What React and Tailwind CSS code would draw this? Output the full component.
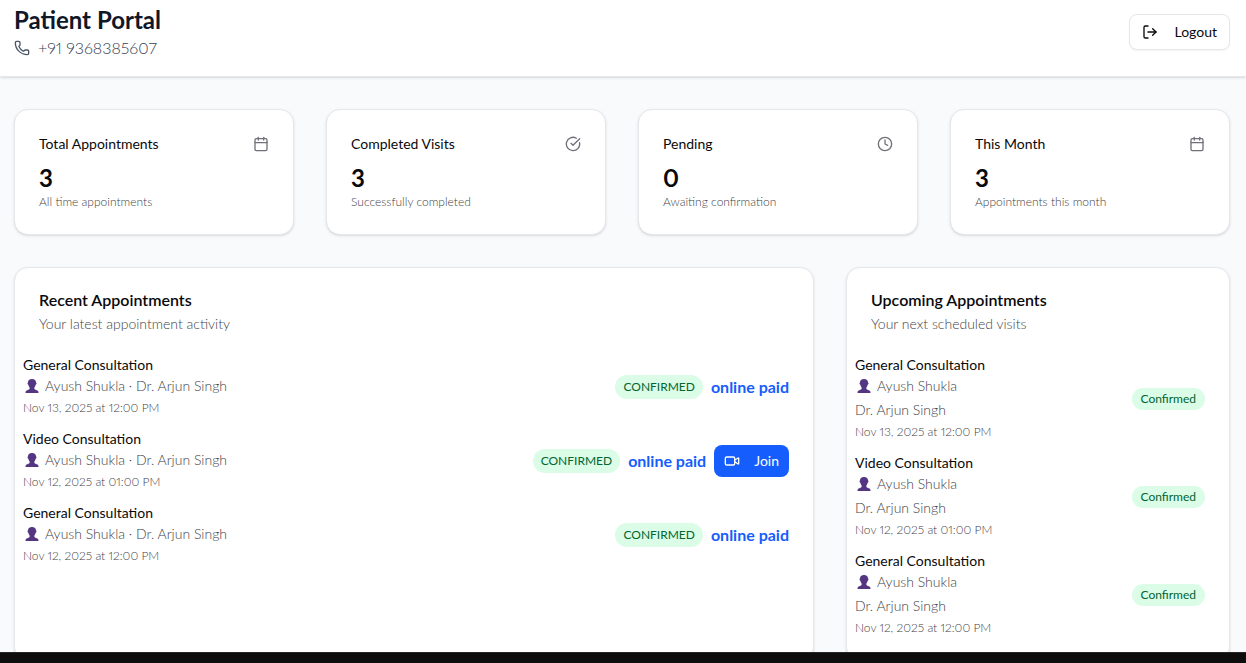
import React from "react";
import {
  Calendar,
  CircleCheckBig,
  Clock,
  LogOut,
  Phone,
  Video
} from "lucide-react";

const stats = [
  { title: "Total Appointments", value: 3, note: "All time appointments", icon: Calendar },
  { title: "Completed Visits", value: 3, note: "Successfully completed", icon: CircleCheckBig },
  { title: "Pending", value: 0, note: "Awaiting confirmation", icon: Clock },
  { title: "This Month", value: 3, note: "Appointments this month", icon: Calendar }
];

const appointments = [
  {
    id: 1,
    type: "General Consultation",
    patient: "Ayush Shukla",
    doctor: "Dr. Arjun Singh",
    date: "Nov 13, 2025 at 12:00 PM",
    canJoin: false
  },
  {
    id: 2,
    type: "Video Consultation",
    patient: "Ayush Shukla",
    doctor: "Dr. Arjun Singh",
    date: "Nov 12, 2025 at 01:00 PM",
    canJoin: true
  },
  {
    id: 3,
    type: "General Consultation",
    patient: "Ayush Shukla",
    doctor: "Dr. Arjun Singh",
    date: "Nov 12, 2025 at 12:00 PM",
    canJoin: false
  }
];

const PersonIcon = () => (
  <svg viewBox="0 0 14 14" className="h-3.5 w-3.5" aria-hidden="true">
    <path
      d="M7 0C4.4 0 3 1.2 3 3.5c-.5.1-.6.6-.5 1.1.1.6.4 1 .8 1.1.3 1.2.7 2.200 1.300 2.800v1.500C4.200 10.800 1.700 10.900.9 12.100.6 12.600.5 13.300.5 14h13c0-.7-.1-1.400-.4-1.900C12.300 10.900 9.800 10.800 9.400 10V8.500c.6-.6 1-1.600 1.300-2.800.4-.1.7-.5.8-1.100.1-.5 0-1-.5-1.100C11 1.200 9.600 0 7 0Z"
      fill="#533582"
    />
  </svg>
);

const Card = ({ className = "", children }) => (
  <div className={`rounded-[14px] border border-gray-200 bg-white shadow-sm ${className}`}>
    {children}
  </div>
);

const StatCard = ({ title, value, note, icon: Icon }) => (
  <Card className="p-6">
    <div className="mb-2 flex items-center justify-between">
      <h3 className="text-sm">{title}</h3>
      <Icon className="h-4 w-4 text-zinc-500" />
    </div>
    <div className="text-2xl font-bold">{value}</div>
    <p className="text-xs font-light text-zinc-700">{note}</p>
  </Card>
);

const ListCard = ({ title, description, className = "", children }) => (
  <Card className={`py-6 ${className}`}>
    <div className="mb-6 px-6">
      <h2 className="mb-1.5 text-base leading-4 font-semibold">{title}</h2>
      <p className="text-sm font-light text-zinc-700">{description}</p>
    </div>
    <ul className="space-y-4 pr-6 pl-2">{children}</ul>
  </Card>
);

const PatientLine = ({ children }) => (
  <p className="flex items-center text-sm leading-6 font-light text-zinc-700">
    <span className="mr-1.5 ml-0.5">
      <PersonIcon />
    </span>
    {children}
  </p>
);

const App = () => {
  return (
    <div className="flex h-screen flex-col overflow-hidden bg-gray-50 font-['Lato',sans-serif] text-zinc-950 proportional-nums">
      <div className="min-h-0 flex-1 overflow-hidden">
        <header className="flex items-center justify-between border-b border-gray-200 bg-white pt-1 pr-4 pb-4 pl-3.5 shadow-sm">
          <div>
            <h1 className="text-2xl font-bold text-gray-900">Patient Portal</h1>
            <p className="flex items-center gap-2 text-base font-light text-gray-700">
              <Phone className="h-4 w-4 text-gray-600" />
              +91 9368385607
            </p>
          </div>
          <button
            type="button"
            className="flex h-9 items-center gap-4 rounded-lg border border-gray-200 bg-white px-3 text-sm shadow-xs"
          >
            <LogOut className="h-4 w-4" />
            Logout
          </button>
        </header>

        <main className="space-y-8 py-8 pr-4 pl-3.5">
          {/* Stats */}
          <div className="grid grid-cols-4 gap-8">
            {stats.map((stat) => (
              <StatCard key={stat.title} {...stat} />
            ))}
          </div>

          <div className="grid grid-cols-3 gap-8">
            {/* Recent Appointments */}
            <ListCard
              title="Recent Appointments"
              description="Your latest appointment activity"
              className="col-span-2"
            >
              {appointments.map((item) => (
                <li key={item.id} className="flex items-center justify-between">
                  <div>
                    <h3 className="mb-0.5 text-sm leading-3.5">{item.type}</h3>
                    <PatientLine>
                      {item.patient} · {item.doctor}
                    </PatientLine>
                    <p className="mt-0.5 text-xs font-light text-zinc-700">{item.date}</p>
                  </div>
                  <div className="flex items-center gap-2">
                    <span className="rounded-full bg-green-100 px-2 py-1 text-xs text-green-800">
                      CONFIRMED
                    </span>
                    <span className="font-bold text-blue-600">online paid</span>
                    {item.canJoin && (
                      <button
                        type="button"
                        className="flex h-8 items-center gap-3.5 rounded-lg bg-blue-600 px-2.5 text-sm text-white"
                      >
                        <Video className="h-4 w-4" />
                        Join
                      </button>
                    )}
                  </div>
                </li>
              ))}
            </ListCard>

            {/* Upcoming Appointments */}
            <ListCard title="Upcoming Appointments" description="Your next scheduled visits">
              {appointments.map((item) => (
                <li key={item.id} className="flex items-center justify-between">
                  <div>
                    <h3 className="mb-0.5 text-sm leading-3.5">{item.type}</h3>
                    <PatientLine>{item.patient}</PatientLine>
                    <p className="text-sm leading-6 font-light text-zinc-700">{item.doctor}</p>
                    <p className="mt-0.5 text-xs font-light text-zinc-700">{item.date}</p>
                  </div>
                  <span className="rounded-full border border-transparent bg-green-100 px-2 py-0.5 text-xs text-green-800">
                    Confirmed
                  </span>
                </li>
              ))}
            </ListCard>
          </div>
        </main>
      </div>
      <footer className="h-[11px] shrink-0 border-t border-neutral-800 bg-[#0d0d0d]" />
    </div>
  );
};

export default App;
